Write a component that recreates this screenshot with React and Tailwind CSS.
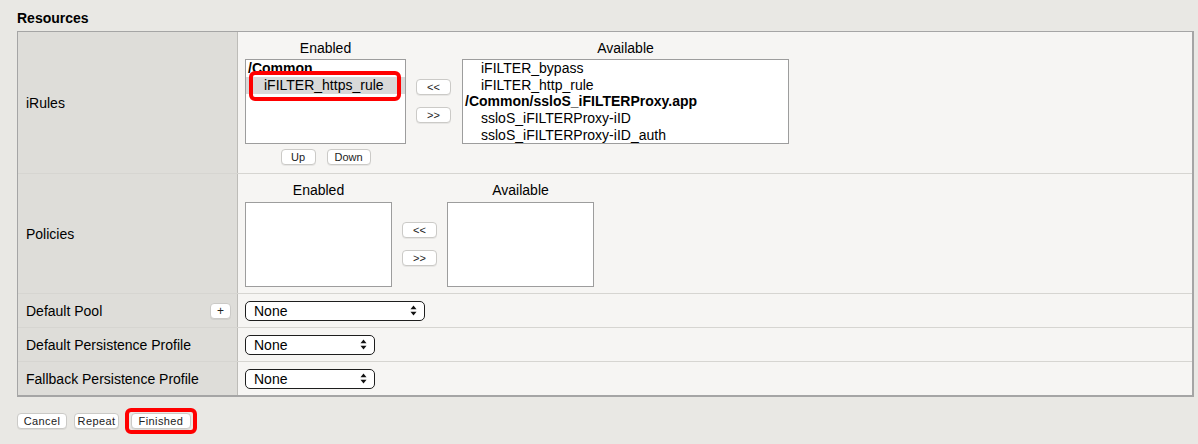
import React from "react";

function SmallButton({ children, className = "" }) {
  return (
    <button
      className={`h-[16px] bg-white border border-[#cbcac7] rounded-[4px] text-[11px] leading-[14px] text-[#222] shadow-[0_1px_0_rgba(0,0,0,0.06)] ${className}`}
    >
      {children}
    </button>
  );
}

function SelectBox({ width }) {
  return (
    <div
      className={`${width} h-[20px] bg-white border-[1.5px] border-[#1e1e1e] rounded-[5px] flex items-center justify-between pl-[8px] pr-[7px]`}
    >
      <span className="text-[14px] leading-[16px]">None</span>
      <svg width="7" height="11" viewBox="0 0 7 11">
        <path d="M3.5 0.5 L6.5 4.2 L0.5 4.2 Z" fill="#111" />
        <path d="M3.5 10.5 L6.5 6.8 L0.5 6.8 Z" fill="#111" />
      </svg>
    </div>
  );
}

function Row({ label, extra, height, last, children }) {
  return (
    <div className={`flex ${height} ${last ? "" : "border-b border-[#d6d5d1]"}`}>
      <div className="w-[220px] shrink-0 bg-[#deddd9] border-r border-[#bdbcb8] pl-[8px] pr-[6px] flex items-center justify-between">
        <span className="text-[14px] leading-[16px]">{label}</span>
        {extra}
      </div>
      <div className="flex-1 bg-[#f6f5f3]">{children}</div>
    </div>
  );
}

export default function App() {
  const available = [
    { t: "iFILTER_bypass", indent: true },
    { t: "iFILTER_http_rule", indent: true },
    { t: "/Common/ssloS_iFILTERProxy.app", bold: true },
    { t: "ssloS_iFILTERProxy-iID", indent: true },
    { t: "ssloS_iFILTERProxy-iID_auth", indent: true },
  ];

  return (
    <div className="w-[1198px] h-[444px] bg-[#e9e8e4] text-black font-['Liberation_Sans',Arial,sans-serif] overflow-hidden">
      <div className="pl-[17px] pt-[10px] text-[14px] leading-[16px] font-bold">
        Resources
      </div>

      <div className="mt-[5px] ml-[17px] w-[1177px] border-t border-l border-r-2 border-b-2 border-[#a5a5a5]">
        {/* iRules */}
        <Row label="iRules" height="h-[142px]">
          <div className="flex pl-[7px] pt-[8px]">
            <div className="w-[161px] flex flex-col items-center">
              <div className="text-[14px] leading-[16px] mb-[3px]">Enabled</div>
              <div className="relative w-[161px] h-[85px] bg-white border border-[#9d9d9d] overflow-hidden">
                <div className="text-[14px] leading-[17px]">
                  <div className="font-bold pl-[2px]">/Common</div>
                  <div className="bg-[#d9d9d9] pl-[18px]">iFILTER_https_rule</div>
                </div>
                <div className="absolute left-[3px] top-[11px] w-[152px] h-[30px] border-4 border-[#ff0000] rounded-[6px]" />
              </div>
              <div className="flex gap-[11px] mt-[5px]">
                <SmallButton className="w-[35px]">Up</SmallButton>
                <SmallButton className="w-[44px]">Down</SmallButton>
              </div>
            </div>

            <div className="ml-[10px] mt-[39px] flex flex-col gap-[12px]">
              <SmallButton className="w-[35px] text-[9px]">&lt;&lt;</SmallButton>
              <SmallButton className="w-[35px] text-[9px]">&gt;&gt;</SmallButton>
            </div>

            <div className="ml-[11px] w-[327px] flex flex-col items-center">
              <div className="text-[14px] leading-[16px] mb-[3px]">Available</div>
              <div className="w-[327px] h-[85px] bg-white border border-[#9d9d9d] overflow-hidden">
                <div className="text-[14px] leading-[16.7px]">
                  {available.map((a) => (
                    <div
                      key={a.t}
                      className={a.bold ? "font-bold pl-[2px]" : "pl-[18px]"}
                    >
                      {a.t}
                    </div>
                  ))}
                </div>
              </div>
            </div>
          </div>
        </Row>

        {/* Policies */}
        <Row label="Policies" height="h-[120px]">
          <div className="flex pl-[7px] pt-[8px]">
            <div className="w-[147px] flex flex-col items-center">
              <div className="text-[14px] leading-[16px] mb-[4px]">Enabled</div>
              <div className="w-[147px] h-[85px] bg-white border border-[#9d9d9d]" />
            </div>
            <div className="ml-[10px] mt-[40px] flex flex-col gap-[12px]">
              <SmallButton className="w-[35px] text-[9px]">&lt;&lt;</SmallButton>
              <SmallButton className="w-[35px] text-[9px]">&gt;&gt;</SmallButton>
            </div>
            <div className="ml-[10px] w-[147px] flex flex-col items-center">
              <div className="text-[14px] leading-[16px] mb-[4px]">Available</div>
              <div className="w-[147px] h-[85px] bg-white border border-[#9d9d9d]" />
            </div>
          </div>
        </Row>

        <Row
          label="Default Pool"
          height="h-[34px]"
          extra={<SmallButton className="w-[21px] text-[12px]">+</SmallButton>}
        >
          <div className="h-full flex items-center pl-[7px]">
            <SelectBox width="w-[180px]" />
          </div>
        </Row>

        <Row label="Default Persistence Profile" height="h-[34px]">
          <div className="h-full flex items-center pl-[7px]">
            <SelectBox width="w-[130px]" />
          </div>
        </Row>

        <Row label="Fallback Persistence Profile" height="h-[33px]" last>
          <div className="h-full flex items-center pl-[7px]">
            <SelectBox width="w-[130px]" />
          </div>
        </Row>
      </div>

      <div className="mt-[11px] pl-[17px] flex items-center">
        <SmallButton className="w-[50px] tracking-[0.4px]">Cancel</SmallButton>
        <SmallButton className="ml-[7px] w-[45px] tracking-[0.4px]">Repeat</SmallButton>
        <div className="ml-[6px] border-4 border-[#ff0000] rounded-[6px] px-[2px] py-[1px]">
          <SmallButton className="w-[60px] tracking-[0.4px] block">Finished</SmallButton>
        </div>
      </div>
    </div>
  );
}
